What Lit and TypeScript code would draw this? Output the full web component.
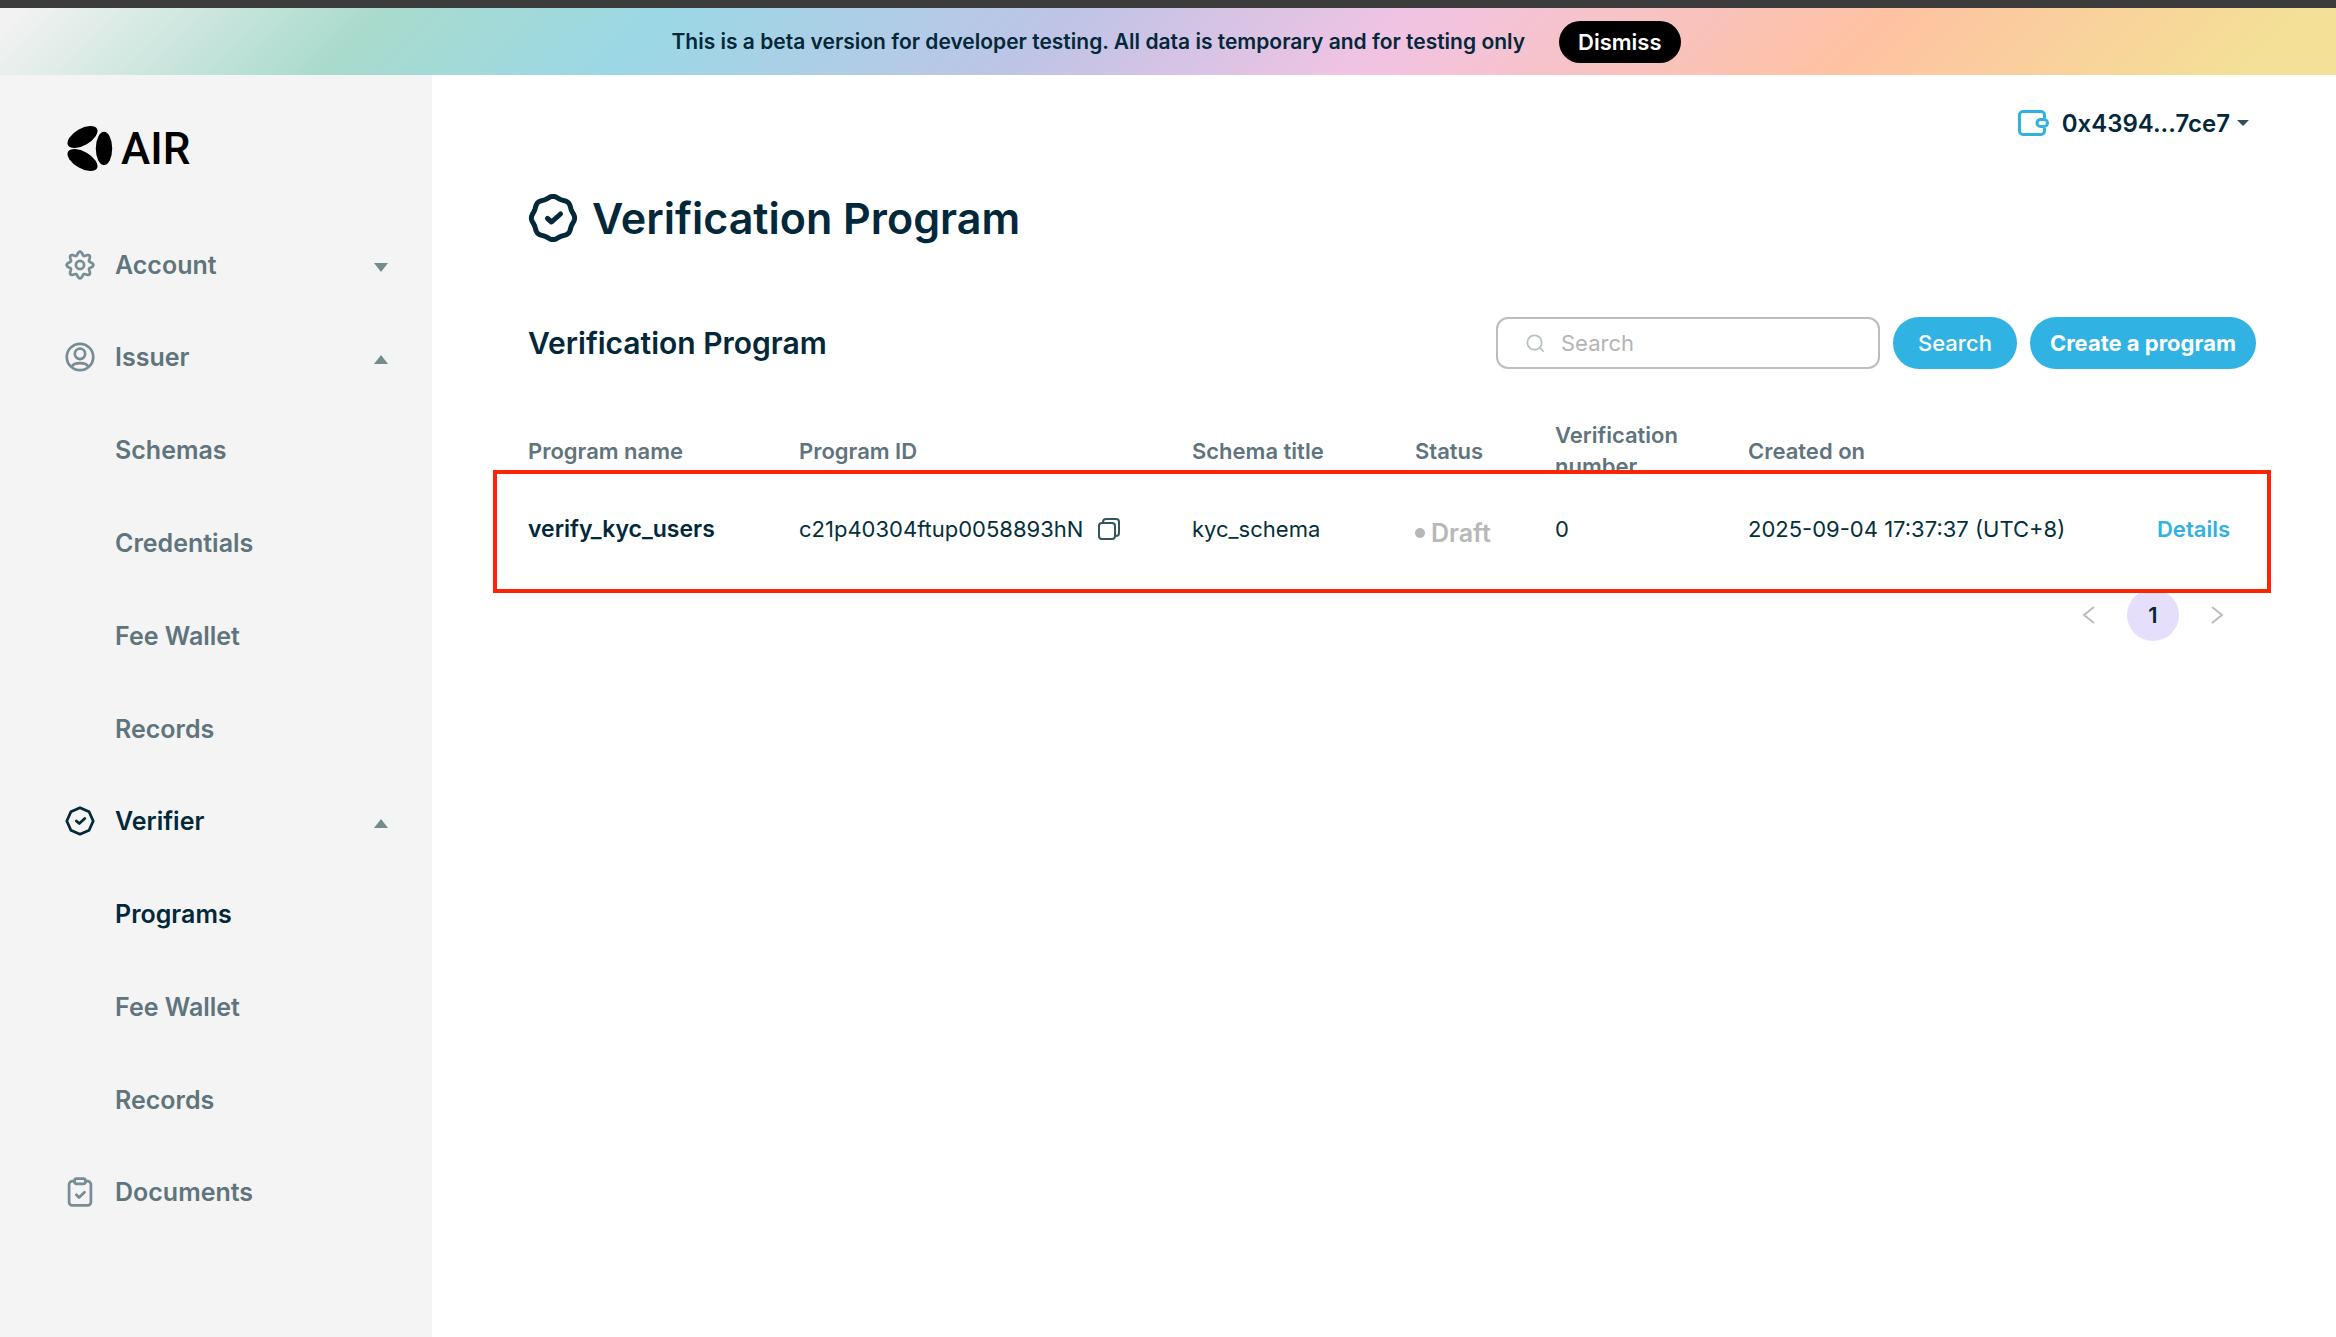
import { LitElement, html, svg, css, nothing } from "lit";
import { customElement, state } from "lit/decorators.js";

/** Closed outline with eight soft lobes around (c, c). */
const lobes = (c: number, radius: number, depth: number): string => {
  const steps = 144;
  const points: string[] = [];
  for (let i = 0; i < steps; i++) {
    const a = (i / steps) * Math.PI * 2;
    const r = radius + depth * Math.cos(8 * a);
    points.push(`${(c + r * Math.cos(a)).toFixed(2)} ${(c + r * Math.sin(a)).toFixed(2)}`);
  }
  return `M${points.join("L")}Z`;
};

const icons = {
  gear: svg`<path d=${lobes(12, 8.5, 1.3)}/><circle cx="12" cy="12" r="3"/>`,
  user: svg`<circle cx="12" cy="12" r="9.7"/><circle cx="12" cy="9.7" r="3.8"/><path d="M6.500 18.300c1-1.300 3-1.800 5.500-1.800s4.500.5 5.500 1.800"/>`,
  badge: svg`<path d="M12 2.300L18.700 5.300 21.700 12 18.700 18.700 12 21.700 5.300 18.700 2.300 12 5.300 5.300z"/><path d="M9.300 12l2.200 1.900 4-3.700"/>`,
  clip: svg`<path d="M8 4H6.500A2.500 2.500 0 0 0 4 6.500v13A2.300 2.300 0 0 0 6.300 21.800h11.400a2.300 2.300 0 0 0 2.300-2.300v-13A2.500 2.500 0 0 0 17.500 4H16"/><rect x="8" y="2.2" width="8" height="3.8" rx="1.5"/><path d="M9.300 14l2 2L15.300 12.200"/>`,
};

interface Entry { label: string; icon?: "gear" | "user" | "badge" | "clip"; arrow?: "up" | "down"; active?: boolean; }

const MENU: Entry[] = [
  { label: "Account", icon: "gear", arrow: "down" },
  { label: "Issuer", icon: "user", arrow: "up" },
  { label: "Schemas" },
  { label: "Credentials" },
  { label: "Fee Wallet" },
  { label: "Records" },
  { label: "Verifier", icon: "badge", arrow: "up", active: true },
  { label: "Programs", active: true },
  { label: "Fee Wallet" },
  { label: "Records" },
  { label: "Documents", icon: "clip" },
];

@customElement("air-sidebar")
export class AirSidebar extends LitElement {
  static styles = css`
    :host { display: block; background: #f4f4f4; padding: 50px 41px 0 65px; box-sizing: border-box; }
    .logo { display: flex; align-items: center; gap: 8px; height: 48px; color: #000; text-decoration: none; font: 500 44px/48px Roboto, sans-serif; }
    .mark { width: 48px; height: 48px; fill: #000; }
    nav { display: flex; flex-direction: column; margin-top: 46px; }
    .item { display: flex; align-items: center; gap: 20px; height: 93px; padding: 0; border: 0; background: none; width: 100%; box-sizing: border-box; font: 600 25px/32px Inter, sans-serif; color: #5f747d; text-align: left; text-decoration: none; cursor: pointer; }
    .head { height: 92px; }
    .sub { padding-left: 50px; }
    .active { color: #03283a; }
    .icon { width: 30px; height: 30px; fill: none; stroke: #778c95; stroke-width: 2; stroke-linecap: round; stroke-linejoin: round; }
    .active .icon { stroke: #03283a; }
    .label { flex: 1; }
    .arrow { width: 20px; height: 16px; fill: #738d8b; }
  `;
  render() {
    return html`
      <a class="logo" href="#home">
        <svg class="mark" viewBox="0 0 48 48" aria-hidden="true">
          <ellipse cx="17.5" cy="12" rx="16.7" ry="8.3" transform="rotate(-30 17.5 12)"/>
          <ellipse cx="17.5" cy="35" rx="16.7" ry="8.3" transform="rotate(30 17.5 35)"/>
          <ellipse cx="39" cy="23.5" rx="8.2" ry="16.7"/>
        </svg>
        <span>AIR</span>
      </a>
      <nav>
        ${MENU.map((m) => {
          const body = html`
            ${m.icon ? html`<svg class="icon" viewBox="1 1 22 22" aria-hidden="true">${icons[m.icon]}</svg>` : nothing}
            <span class="label">${m.label}</span>
            ${m.arrow ? html`<svg class="arrow" viewBox="0 0 20 16" aria-hidden="true"><path d=${m.arrow === "up" ? "M3 15L10 6l7 9z" : "M3 6h14l-7 9z"}/></svg>` : nothing}`;
          const cls = `item ${m.icon ? "head" : "sub"} ${m.active ? "active" : ""}`;
          return m.arrow
            ? html`<button class=${cls} aria-expanded=${m.arrow === "up"}>${body}</button>`
            : html`<a class=${cls} href="#page">${body}</a>`;
        })}
      </nav>`;
  }
}

@customElement("app-root")
export class AppRoot extends LitElement {
  @state() private query = "";

  static styles = css`
    :host { display: flex; flex-direction: column; min-height: 100vh; background: #fff; color: #03283a; font-family: Inter, sans-serif; }
    button, input { font-family: inherit; }
    button { border: 0; cursor: pointer; }
    .strip { height: 8px; background: #3c3c3c; }
    .banner { display: flex; align-items: center; justify-content: center; gap: 34px; height: 67px; padding-left: 16px; background: linear-gradient(135deg, #f2f2f2 1%, #a9dbcc 16%, #9bd8e6 28%, #bfc4e6 45%, #f1c3e3 59%, #fec2a2 79%, #f4e096 96%); font-size: 21px; font-weight: 600; line-height: 30px; }
    .dismiss { height: 42px; padding: 0 19px; border-radius: 21px; background: #000; color: #fff; font-size: 22px; font-weight: 600; }
    .shell { flex: 1; display: flex; }
    air-sidebar { flex: 0 0 432px; }
    main { flex: 1; min-width: 0; padding: 28px 80px 40px 96px; }
    .top { display: flex; justify-content: flex-end; }
    .wallet { display: flex; align-items: center; gap: 13px; height: 40px; padding: 0 7px 0 0; background: none; color: #03283a; font-size: 24px; font-weight: 600; }
    .wallet-icon { width: 32px; height: 28px; fill: none; stroke: #30b2e0; stroke-width: 3; stroke-linejoin: round; }
    .account { display: flex; align-items: center; gap: 7px; }
    .caret { width: 12px; height: 6px; fill: #2f5057; }
    h1 { display: flex; align-items: center; gap: 14px; margin: 47px 0 0; font-size: 43px; font-weight: 600; line-height: 56px; }
    .title-icon { width: 50px; height: 50px; fill: none; stroke: #03283a; stroke-width: 5; stroke-linecap: round; stroke-linejoin: round; }
    .tools { display: flex; align-items: center; gap: 13px; margin-top: 71px; }
    h2 { flex: 1; margin: 0; font-size: 30px; font-weight: 600; line-height: 40px; }
    .field { display: flex; align-items: center; gap: 17px; width: 384px; height: 52px; box-sizing: border-box; padding: 0 28px; border: 2px solid #bdbdbd; border-radius: 12px; }
    .lens { flex: none; width: 18px; height: 18px; fill: none; stroke: #b5c3c3; stroke-width: 2; stroke-linecap: round; }
    .field input { flex: 1; min-width: 0; border: 0; outline: 0; padding: 0; background: none; font-size: 22px; line-height: 30px; color: #03283a; }
    .field input::placeholder { color: #b4b4b4; opacity: 1; }
    .btn { height: 52px; border-radius: 26px; background: #30b2e2; color: #fff; font-size: 22px; font-weight: 500; padding: 0 25px; }
    .create { font-weight: 700; padding: 0 20px; }
    .board { position: relative; margin-top: 51px; }
    table { width: 100%; table-layout: fixed; border-collapse: collapse; font-size: 22px; line-height: 31px; }
    th, td { padding: 0; text-align: left; white-space: nowrap; }
    th { height: 62px; font-weight: 600; color: #5f747d; }
    .wrap { white-space: normal; padding-right: 40px; }
    td { height: 94px; color: #03303a; }
    .c1 { width: 271px; } .c2 { width: 393px; } .c3 { width: 223px; } .c4 { width: 140px; } .c5 { width: 193px; }
    .name { font-size: 23px; font-weight: 600; color: #03283a; }
    .id { display: flex; align-items: center; gap: 14px; }
    .copy { display: flex; padding: 0; background: none; }
    .copy-icon { width: 24px; height: 24px; fill: none; stroke: #35545b; stroke-width: 2; stroke-linejoin: round; }
    .draft { display: flex; align-items: center; gap: 6px; padding-top: 8px; font-size: 25px; font-weight: 600; color: #b7b7b7; }
    .dot { width: 10px; height: 10px; border-radius: 50%; background: #b7b7b7; }
    .more { text-align: right; padding-right: 26px; }
    .more a { color: #30b2e2; font-weight: 600; text-decoration: none; }
    .outline { position: absolute; left: -35px; right: -15px; top: 50px; height: 123px; box-sizing: border-box; border: 4px solid #fb2404; pointer-events: none; }
    .pages { display: flex; justify-content: flex-end; align-items: center; gap: 19px; padding-right: 20px; margin-top: 13px; }
    .step { display: flex; align-items: center; justify-content: center; width: 38px; height: 50px; padding: 0; background: none; }
    .step svg { width: 14px; height: 18px; fill: none; stroke: #bcbcbc; stroke-width: 2; }
    .page { width: 52px; height: 52px; padding: 0; border-radius: 50%; background: #e6dffc; color: #03283a; font-size: 22px; font-weight: 600; }
  `;

  render() {
    return html`
      <div class="strip"></div>
      <div class="banner" role="status">
        <span>This is a beta version for developer testing. All data is temporary and for testing only</span>
        <button class="dismiss">Dismiss</button>
      </div>
      <div class="shell">
        <air-sidebar></air-sidebar>
        <main>
          <div class="top">
            <button class="wallet">
              <svg class="wallet-icon" viewBox="0 0 32 28" aria-hidden="true"><path d="M27.500 9V6A3.500 3.500 0 0 0 24 2.500H6A3.500 3.500 0 0 0 2.500 6v16A3.500 3.500 0 0 0 6 25.500h18a3.500 3.500 0 0 0 3.500-3.500v-3"/><rect x="20" y="10.5" width="10.5" height="7" rx="3.5"/></svg>
              <span class="account">0x4394...7ce7<svg class="caret" viewBox="0 0 12 6" aria-hidden="true"><path d="M0 0h12L6 6z"/></svg></span>
            </button>
          </div>
          <h1>
            <svg class="title-icon" viewBox="0 0 50 50" aria-hidden="true"><path d=${lobes(25, 20.8, 0.8)}/><path d="M19.500 25.500l4 3.500 9-8"/></svg>
            Verification Program
          </h1>
          <div class="tools">
            <h2>Verification Program</h2>
            <label class="field">
              <svg class="lens" viewBox="0 0 20 20" aria-hidden="true"><circle cx="9.5" cy="9.5" r="8"/><path d="M15.500 15.500L19 19"/></svg>
              <input type="text" placeholder="Search" aria-label="Search" .value=${this.query} @input=${(e: Event) => (this.query = (e.target as HTMLInputElement).value)} />
            </label>
            <button class="btn">Search</button>
            <button class="btn create">Create a program</button>
          </div>
          <div class="board">
            <table>
              <colgroup><col class="c1" /><col class="c2" /><col class="c3" /><col class="c4" /><col class="c5" /><col /><col class="c4" /></colgroup>
              <thead>
                <tr><th>Program name</th><th>Program ID</th><th>Schema title</th><th>Status</th><th class="wrap">Verification number</th><th>Created on</th><th></th></tr>
              </thead>
              <tbody>
                <tr>
                  <td class="name">verify_kyc_users</td>
                  <td><div class="id">c21p40304ftup0058893hN<button class="copy" aria-label="Copy"><svg class="copy-icon" viewBox="0 0 24 24" aria-hidden="true"><rect x="2" y="6" width="16" height="16" rx="3"/><path d="M6 5.500V5a3 3 0 0 1 3-3h10a3 3 0 0 1 3 3v11a3 3 0 0 1-3 3h-.5"/></svg></button></div></td>
                  <td>kyc_schema</td>
                  <td><div class="draft"><span class="dot"></span>Draft</div></td>
                  <td>0</td>
                  <td>2025-09-04 17:37:37 (UTC+8)</td>
                  <td class="more"><a href="#details">Details</a></td>
                </tr>
              </tbody>
            </table>
            <div class="pages">
              <button class="step" aria-label="Previous page"><svg viewBox="0 0 14 18" aria-hidden="true"><path d="M12 1L2 9l10 8"/></svg></button>
              <button class="page">1</button>
              <button class="step" aria-label="Next page"><svg viewBox="0 0 14 18" aria-hidden="true"><path d="M2 1l10 8L2 17"/></svg></button>
            </div>
            <div class="outline"></div>
          </div>
        </main>
      </div>`;
  }
}
